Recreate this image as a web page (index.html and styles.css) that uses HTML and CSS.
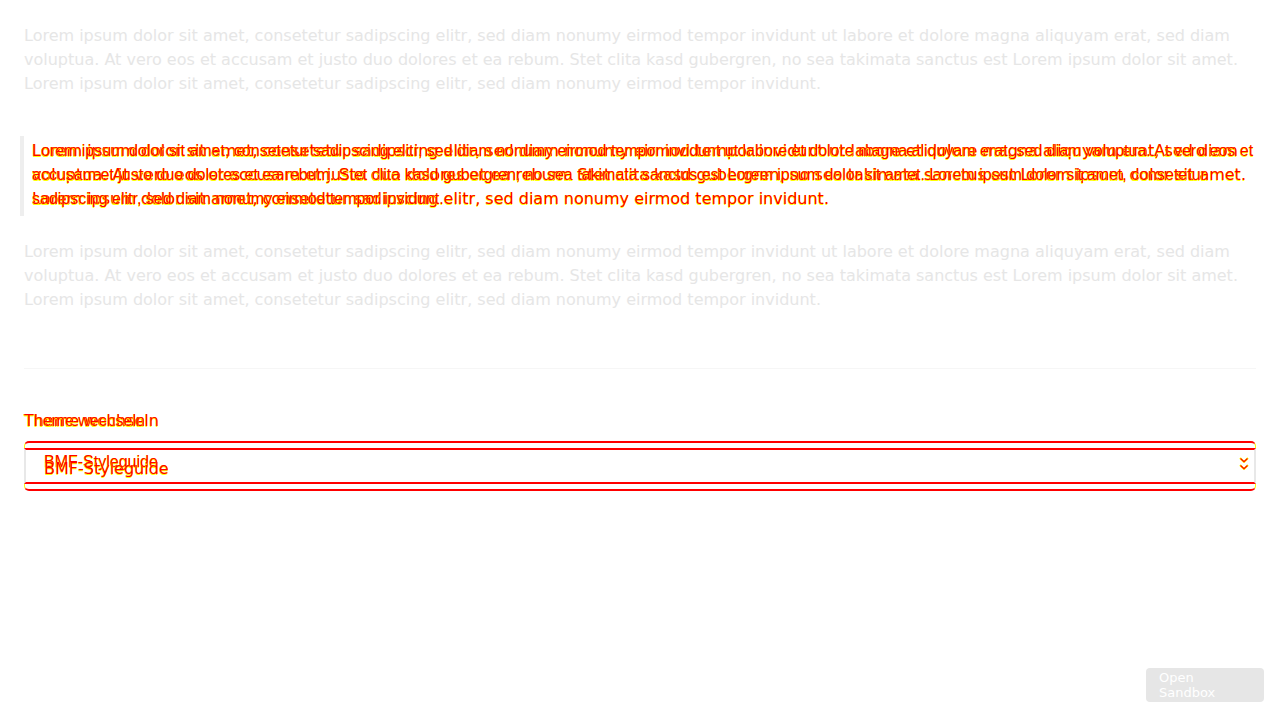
FILE: index.html
```html
<!DOCTYPE html>
<html lang="de">
<head>
<meta charset="utf-8">
<title>Theme</title>
<link rel="stylesheet" href="styles.css">
</head>
<body>
<main class="page">
  <p class="para">Lorem ipsum dolor sit amet, consetetur sadipscing elitr, sed diam nonumy eirmod tempor invidunt ut labore et dolore magna aliquyam erat, sed diam voluptua. At vero eos et accusam et justo duo dolores et ea rebum. Stet clita kasd gubergren, no sea takimata sanctus est Lorem ipsum dolor sit amet. Lorem ipsum dolor sit amet, consetetur sadipscing elitr, sed diam nonumy eirmod tempor invidunt.</p>

  <blockquote class="quote">
    <p class="quote-a diff">Lorem ipsum dolor sit amet, consetetur sadipscing elitr, sed diam nonumy eirmod tempor invidunt ut labore et dolore magna aliquyam erat, sed diam voluptua. At vero eos et accusam et justo duo dolores et ea rebum. Stet clita kasd gubergren, no sea takimata sanctus est Lorem ipsum dolor sit amet. Lorem ipsum dolor sit amet, consetetur sadipscing elitr, sed diam nonumy eirmod tempor invidunt.</p>
    <p class="quote-b diff">Lorem ipsum dolor sit amet, consetetur sadipscing elitr, sed diam nonumy eirmod tempor invidunt ut labore et dolore magna aliquyam erat, sed diam voluptua. At vero eos et accusam et justo duo dolores et ea rebum. Stet clita kasd gubergren, no sea takimata sanctus est Lorem ipsum dolor sit amet. Lorem ipsum dolor sit amet, consetetur sadipscing elitr, sed diam nonumy eirmod tempor invidunt.</p>
  </blockquote>

  <p class="para para-last">Lorem ipsum dolor sit amet, consetetur sadipscing elitr, sed diam nonumy eirmod tempor invidunt ut labore et dolore magna aliquyam erat, sed diam voluptua. At vero eos et accusam et justo duo dolores et ea rebum. Stet clita kasd gubergren, no sea takimata sanctus est Lorem ipsum dolor sit amet. Lorem ipsum dolor sit amet, consetetur sadipscing elitr, sed diam nonumy eirmod tempor invidunt.</p>

  <hr class="rule">

  <div class="field">
    <div class="label">
      <span class="label-a diff">Theme wechseln</span>
      <span class="label-b diff">Theme wechseln</span>
    </div>
    <div class="select">
      <div class="select-inner"></div>
      <span class="select-b diff">BMF-Styleguide</span>
      <span class="select-a diff">BMF-Styleguide</span>
      <svg class="chev chev-b" width="10" height="6" viewBox="0 0 10 6"><polyline points="1,1 5,5 9,1" fill="none" stroke="#ff0" stroke-width="2"/><polyline points="1.5,1.5 5,4.6 8.5,1.5" fill="none" stroke="#f00" stroke-width="1.2"/></svg>
      <svg class="chev chev-a" width="10" height="6" viewBox="0 0 10 6"><polyline points="1,1 5,5 9,1" fill="none" stroke="#ff0" stroke-width="2"/><polyline points="1.5,1.5 5,4.6 8.5,1.5" fill="none" stroke="#f00" stroke-width="1.2"/></svg>
    </div>
  </div>
</main>
<a class="sandbox-btn">Open Sandbox</a>
</body>
</html>
```

FILE: styles.css
```css
html, body {
  margin: 0;
  padding: 0;
  background: #ffffff;
}

body {
  font-family: "DejaVu Sans", sans-serif;
  font-size: 16px;
  line-height: 24px;
  width: 1280px;
  height: 720px;
  position: relative;
  overflow: hidden;
}

.page {
  padding: 24px 24px 0 24px;
}

.para {
  margin: 0 0 40px 0;
  color: #e6e6e6;
}

.para-last {
  margin-bottom: 0;
}

.diff {
  color: #ff0000;
  text-shadow: 0 0.5px #ffff00, 0 -0.5px #ffff00;
}

.quote {
  position: relative;
  margin: 0 0 24px -4px;
  padding: 3px 0 5px 8px;
  border-left: 4px solid #eeeeee;
}

.quote-a {
  margin: 0;
  font-family: "DejaVu Sans", sans-serif;
}

.quote-b {
  position: absolute;
  top: 3px;
  left: 8px;
  right: 0;
  margin: 0;
  font-family: "Liberation Sans", sans-serif;
}

.rule {
  margin: 56px 0 0 0;
  border: 0;
  border-top: 1px solid #f6f6f6;
  height: 0;
}

.field {
  margin-top: 40px;
}

.label {
  position: relative;
  height: 24px;
  margin-bottom: 8px;
}

.label-a {
  font-family: "DejaVu Sans", sans-serif;
}

.label-b {
  position: absolute;
  left: 0;
  top: 0;
  font-family: "Liberation Sans", sans-serif;
}

.select {
  position: relative;
  height: 46px;
  border-top: 2px solid #ff0000;
  border-bottom: 2px solid #ff0000;
  border-left: 1px solid #ffff00;
  border-right: 1px solid #ffff00;
  border-radius: 5px;
}

.select-inner {
  position: absolute;
  top: 5px;
  bottom: 5px;
  left: -1px;
  right: -1px;
  border-top: 2px solid #ff0000;
  border-bottom: 2px solid #ff0000;
  border-left: 2px solid #e8e8e8;
  border-right: 2px solid #e8e8e8;
  background: #ffffff;
}

.select-a,
.select-b {
  position: absolute;
  left: 19px;
  line-height: 20px;
  white-space: nowrap;
}

.select-b {
  top: 9px;
  font-family: "Liberation Sans", sans-serif;
}

.select-a {
  top: 16px;
  font-family: "DejaVu Sans", sans-serif;
}

.chev {
  position: absolute;
  right: 6px;
}

.chev-b {
  top: 14px;
}

.chev-a {
  top: 21px;
}

.sandbox-btn {
  position: absolute;
  right: 16px;
  bottom: 18px;
  width: 92px;
  padding: 2px 13px 2px 13px;
  background: #e6e6e6;
  color: #ffffff;
  border-radius: 4px;
  font-family: "DejaVu Sans", sans-serif;
  font-size: 13px;
  line-height: 15px;
}
```
